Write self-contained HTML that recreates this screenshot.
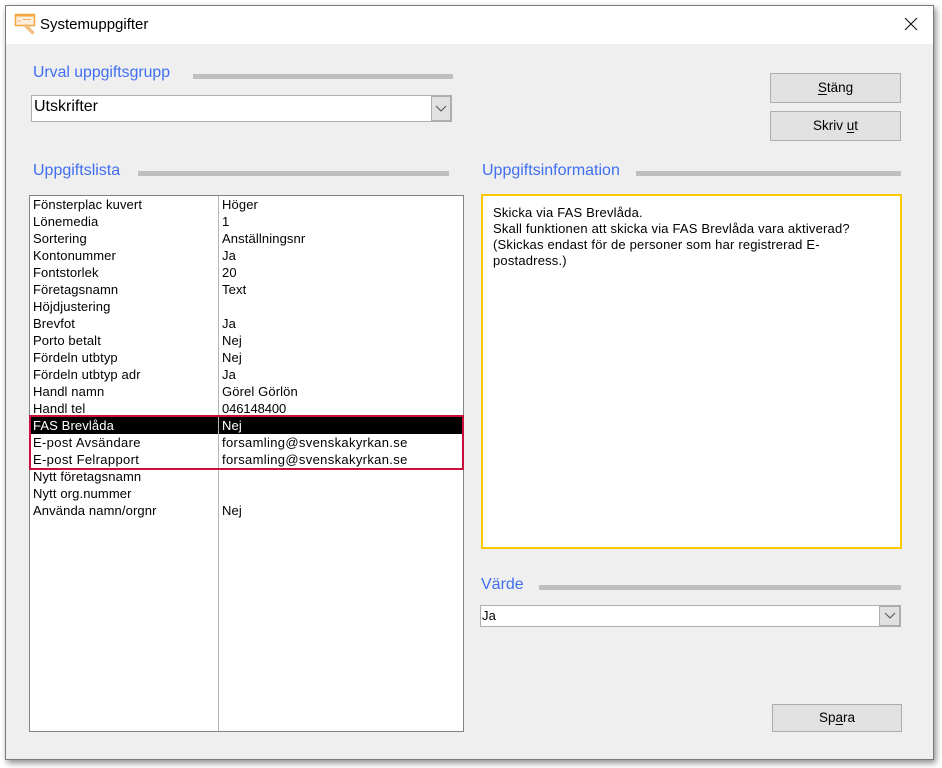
<!DOCTYPE html>
<html lang="sv"><head><meta charset="utf-8"><title>Systemuppgifter</title>
<style>
html,body{margin:0;padding:0;background:#fff}
body{width:942px;height:768px;position:relative;overflow:hidden;font-family:"Liberation Sans",sans-serif;font-size:13px;color:#000}
div,span.a{position:absolute;box-sizing:border-box}
.win{left:5px;top:5px;width:929px;height:755px;background:#efefef;border:1px solid #7a7a7a;box-shadow:2px 3px 6px rgba(0,0,0,.45)}
.title{left:6px;top:6px;width:927px;height:38px;background:#fff}
.h{color:#3f6ff0;font-size:16px;line-height:20px;white-space:nowrap}
.bar{background:#bfbfbf;height:5px}
.btn{background:#e1e1e1;border:1px solid #adadad;text-align:center;font-size:13.5px;white-space:nowrap}
.combo{background:#fff;border:1px solid #adadad}
.cb{background:#e1e1e1;border:2px solid #adadad;border-left-width:1px}
.t{white-space:nowrap;line-height:17px;height:17px;letter-spacing:.12px}
.m{letter-spacing:.34px}
.list{left:29px;top:195px;width:435px;height:537px;background:#fff;border:1px solid #82828a}
u{text-underline-offset:2px}
</style></head><body>
<div class="win"></div>
<div class="title"></div>
<svg style="position:absolute;left:14px;top:13px" width="22" height="22" viewBox="0 0 22 22">
<rect x="1.5" y="1.5" width="19" height="11" fill="#fdeedd" stroke="#f5a63c" stroke-width="1.5"/>
<rect x="1" y="1" width="20" height="2.5" fill="#f5a63c"/>
<path d="M4 8h3M9 6.500h8" stroke="#f5b060" stroke-width="1"/>
<path d="M11 12l8.500 8.500" stroke="#f3bd7d" stroke-width="3.4"/>
</svg>
<div class="t" style="left:40px;top:15px;font-size:15px;line-height:20px;height:20px;letter-spacing:0">Systemuppgifter</div>
<svg style="position:absolute;left:904px;top:17px" width="14" height="14" viewBox="0 0 14 14"><path d="M1 1l12 12M13 1L1 13" stroke="#111" stroke-width="1.1" fill="none"/></svg>

<div class="h" style="left:33px;top:63px;font-size:15.8px">Urval uppgiftsgrupp</div>
<div class="bar" style="left:193px;top:74px;width:260px"></div>
<div class="combo" style="left:31px;top:95px;width:421px;height:27px"></div>
<div class="t" style="left:34px;top:97px;font-size:16px;line-height:20px;height:20px;letter-spacing:0">Utskrifter</div>
<div class="cb" style="left:431px;top:95px;width:21px;height:27px"></div>
<svg style="position:absolute;left:435px;top:105px" width="12" height="8" viewBox="0 0 12 8"><path d="M1 1l5 5 5-5" fill="none" stroke="#555" stroke-width="1.1"/></svg>

<div class="btn" style="left:770px;top:73px;width:131px;height:30px;line-height:27px"><u>S</u>täng</div>
<div class="btn" style="left:770px;top:111px;width:131px;height:30px;line-height:28px">Skriv <u>u</u>t</div>

<div class="h" style="left:33px;top:161px">Uppgiftslista</div>
<div class="bar" style="left:138px;top:171px;width:311px"></div>
<div class="h" style="left:482px;top:161px">Uppgiftsinformation</div>
<div class="bar" style="left:636px;top:171px;width:265px"></div>

<div class="list"></div>
<div style="left:30px;top:417px;width:433px;height:17px;background:#000"></div>
<div style="left:218px;top:196px;width:1px;height:535px;background:#b4b4b4"></div>

<div class="t" style="left:33px;top:196px">Fönsterplac kuvert</div><div class="t" style="left:222px;top:196px">Höger</div>
<div class="t" style="left:33px;top:213px">Lönemedia</div><div class="t" style="left:222px;top:213px">1</div>
<div class="t" style="left:33px;top:230px">Sortering</div><div class="t" style="left:222px;top:230px">Anställningsnr</div>
<div class="t" style="left:33px;top:247px">Kontonummer</div><div class="t" style="left:222px;top:247px">Ja</div>
<div class="t" style="left:33px;top:264px">Fontstorlek</div><div class="t" style="left:222px;top:264px">20</div>
<div class="t" style="left:33px;top:281px">Företagsnamn</div><div class="t" style="left:222px;top:281px">Text</div>
<div class="t" style="left:33px;top:298px">Höjdjustering</div>
<div class="t" style="left:33px;top:315px">Brevfot</div><div class="t" style="left:222px;top:315px">Ja</div>
<div class="t" style="left:33px;top:332px">Porto betalt</div><div class="t" style="left:222px;top:332px">Nej</div>
<div class="t" style="left:33px;top:349px">Fördeln utbtyp</div><div class="t" style="left:222px;top:349px">Nej</div>
<div class="t" style="left:33px;top:366px">Fördeln utbtyp adr</div><div class="t" style="left:222px;top:366px">Ja</div>
<div class="t" style="left:33px;top:383px">Handl namn</div><div class="t" style="left:222px;top:383px">Görel Görlön</div>
<div class="t" style="left:33px;top:400px">Handl tel</div><div class="t" style="left:222px;top:400px;letter-spacing:-.1px">046148400</div>
<div class="t" style="left:33px;top:417px;color:#fff">FAS Brevlåda</div><div class="t" style="left:222px;top:417px;color:#fff">Nej</div>
<div class="t m" style="left:33px;top:434px">E-post Avsändare</div><div class="t m" style="left:222px;top:434px">forsamling@svenskakyrkan.se</div>
<div class="t m" style="left:33px;top:451px">E-post Felrapport</div><div class="t m" style="left:222px;top:451px">forsamling@svenskakyrkan.se</div>
<div class="t" style="left:33px;top:468px">Nytt företagsnamn</div>
<div class="t" style="left:33px;top:485px">Nytt org.nummer</div>
<div class="t" style="left:33px;top:502px">Använda namn/orgnr</div><div class="t" style="left:222px;top:502px">Nej</div>
<div style="left:29px;top:415px;width:435px;height:55px;border:2px solid #c8103c"></div>

<div style="left:481px;top:194px;width:421px;height:355px;background:#fff;border:2px solid #fdc800"></div>
<div class="t" style="left:493px;top:205px;line-height:16px;letter-spacing:.19px">Skicka via FAS Brevlåda.<br>Skall funktionen att skicka via FAS Brevlåda vara aktiverad?<br>(Skickas endast för de personer som har registrerad E-<br>postadress.)</div>

<div class="h" style="left:481px;top:575px">Värde</div>
<div class="bar" style="left:539px;top:585px;width:362px"></div>
<div class="combo" style="left:480px;top:605px;width:421px;height:22px"></div>
<div class="t" style="left:482px;top:607px">Ja</div>
<div class="cb" style="left:879px;top:605px;width:22px;height:22px"></div>
<svg style="position:absolute;left:884px;top:612px" width="12" height="8" viewBox="0 0 12 8"><path d="M1 1l5 5 5-5" fill="none" stroke="#555" stroke-width="1.1"/></svg>

<div class="btn" style="left:772px;top:704px;width:130px;height:28px;line-height:25px">Sp<u>a</u>ra</div>
</body></html>
